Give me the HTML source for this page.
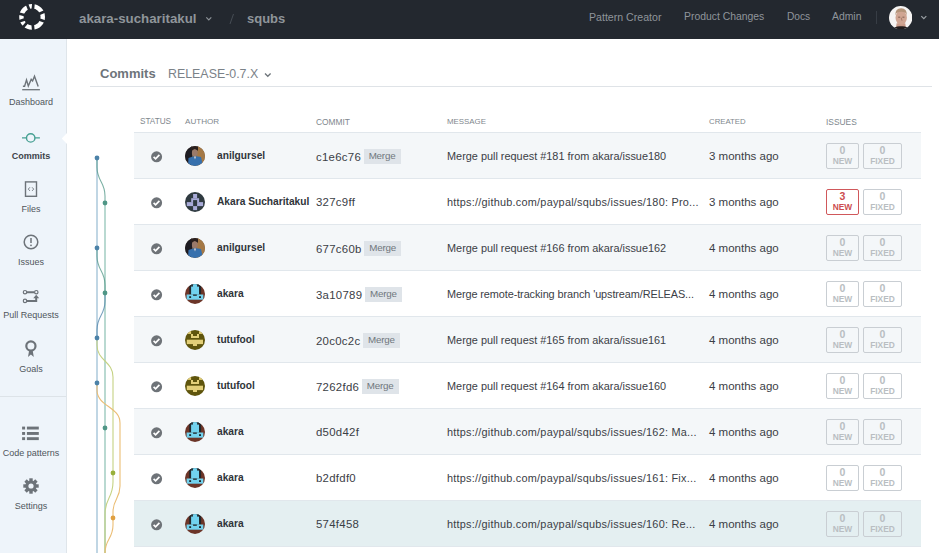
<!DOCTYPE html>
<html><head><meta charset="utf-8">
<style>
*{box-sizing:border-box;margin:0;padding:0}
html,body{width:939px;height:553px;overflow:hidden;background:#fff;font-family:"Liberation Sans",sans-serif}
.abs{position:absolute}
.t{position:absolute;white-space:nowrap;line-height:1}
#hdr{position:absolute;left:0;top:0;width:939px;height:39px;background:#23282f}
#side{position:absolute;left:0;top:39px;width:67px;height:514px;background:#eef4fa;border-right:1px solid #dfe5ea}
.nl{position:absolute;left:0;width:62px;text-align:center;font-size:9px;color:#50565c;white-space:nowrap;line-height:1}
.row{position:absolute;left:134px;width:787px;height:46px;border-bottom:1px solid #e1e7ec}
.odd{background:#f4f7f9}
.hl{background:#e4eff1}
.th{position:absolute;top:118px;font-size:8.5px;color:#80878d;white-space:nowrap;line-height:1}
.st{position:absolute;left:17px;top:18px}
.av{position:absolute;left:51px;top:13px;width:20px;height:20px}
.au{position:absolute;left:83px;top:18px;font-size:10.2px;font-weight:bold;color:#2f3439;white-space:nowrap;line-height:1}
.hs{position:absolute;left:182px;top:18px;font-size:11.4px;color:#3b4046;white-space:nowrap;line-height:1;letter-spacing:0.28px}
.mg{position:absolute;left:0;top:-2px;width:37px;height:15px;background:#dfe4e9;color:#70777d;font-size:9.8px;letter-spacing:-0.2px;line-height:14px;text-align:center}
.hw{position:relative;display:inline-block}
.ms{position:absolute;left:313px;top:18px;font-size:10.9px;color:#3b4046;white-space:nowrap;line-height:1}
.cr{position:absolute;left:575px;top:18px;font-size:11.5px;color:#3b4046;white-space:nowrap;line-height:1}
.bd{position:absolute;top:10px;height:26px;border:1px solid #c9ced3;border-radius:2px;color:#b9bec2;text-align:center;font-weight:bold;background:transparent}
.bd .n{position:absolute;left:0;right:0;top:1px;font-size:10.5px;line-height:1}
.bd .l{position:absolute;left:0;right:0;top:13px;font-size:8.4px;line-height:1}
.b1{left:692px;width:33px}
.b2{left:729px;width:39px}
.red{border-color:#d0585b;color:#cc4d50}
</style></head><body>

<div id="hdr">
<svg class="abs" style="left:0;top:0" width="60" height="39"><circle cx="32.1" cy="16.9" r="10.7" fill="none" stroke="#ffffff" stroke-width="4.4"/><path d="M32.71 10.93L33.62 1.98M29.85 11.34L26.48 2.99M37.62 14.56L45.91 11.04M37.74 18.95L46.20 22.03M32.62 22.88L33.41 31.84M28.16 21.43L22.26 28.22M26.43 18.85L17.92 21.78M26.28 15.45L17.55 13.27" stroke="#23282f" stroke-width="2.7"/></svg>
<div class="t" style="left:79px;top:12px;font-size:13.3px;font-weight:bold;color:#8f959a">akara-sucharitakul</div>
<svg class="abs" style="left:205px;top:16px" width="8" height="6"><path d="M1.3 1.3 L3.8 3.8 L6.3 1.3" fill="none" stroke="#8d9398" stroke-width="1.2"/></svg>
<svg class="abs" style="left:228px;top:9px" width="8" height="18"><path d="M5.5 5 L2 15" stroke="#4a5058" stroke-width="0.9"/></svg>
<div class="t" style="left:247px;top:12px;font-size:13px;font-weight:bold;color:#8f959a">squbs</div>
<div class="t" style="left:589px;top:11.5px;font-size:10.6px;color:#8f959b">Pattern Creator</div>
<div class="t" style="left:684px;top:11.5px;font-size:10.4px;color:#8f959b">Product Changes</div>
<div class="t" style="left:787px;top:11.5px;font-size:10.2px;color:#8f959b">Docs</div>
<div class="t" style="left:832px;top:11.5px;font-size:10.4px;color:#8f959b">Admin</div>
<div class="abs" style="left:876px;top:11px;width:1px;height:13px;background:#373d45"></div>
<svg class="abs" style="left:889px;top:5.5px" width="23.4" height="23.4" viewBox="0 0 23 23"><defs><clipPath id="uc"><circle cx="11.5" cy="11.5" r="11.5"/></clipPath><filter id="bl"><feGaussianBlur stdDeviation="0.5"/></filter></defs><g clip-path="url(#uc)"><rect width="23" height="23" fill="#f6f4f3"/><g filter="url(#bl)"><path d="M7 21 L7.5 17 L16 17 L16.5 21Z" fill="#c99a88"/><ellipse cx="12" cy="11.5" rx="5.6" ry="7" fill="#d0a592"/><path d="M6.2 9 Q6 2.5 12 2.3 Q18 2.5 17.6 9.5 L16.5 7 Q12 4.5 7.5 7Z" fill="#b49479"/><path d="M9 11 H11 M13.2 11 H15.2" stroke="#7a5a4c" stroke-width="0.9"/><path d="M12 11.5 L12.8 14.5" stroke="#9a6e60" stroke-width="0.8"/><path d="M2 23.5 Q6 19.5 12 20 Q18 19.5 21 23.5Z" fill="#221e1e"/></g></g></svg>
<svg class="abs" style="left:920px;top:15px" width="8" height="5"><path d="M1.3 1.2 L3.8 3.7 L6.3 1.2" fill="none" stroke="#9ba0a5" stroke-width="1.2"/></svg>
</div>
<div id="side"></div>
<svg class="abs" style="left:18px;top:70px" width="26" height="24"><path d="M4.9 16.2 L6.6 16.2 L8.5 9.9 L10.3 16 L13.2 9.4 L14.6 11 L16.5 6.3 L20.2 16.5" fill="none" stroke="#6d7379" stroke-width="1.4" stroke-linejoin="miter"/><path d="M4.2 19.7 H21.9" stroke="#6d7379" stroke-width="1.3"/></svg>
<div class="nl" style="top:98px">Dashboard</div>
<svg class="abs" style="left:18px;top:125px" width="26" height="26"><circle cx="12.7" cy="12.9" r="4.2" fill="none" stroke="#46a092" stroke-width="1.4"/><path d="M4 12.9 H8.5 M16.9 12.9 H21.9" stroke="#46a092" stroke-width="1.4"/></svg>
<div class="nl" style="top:152px;font-weight:bold;color:#3d4349">Commits</div>
<svg class="abs" style="left:61px;top:133px" width="7" height="11"><path d="M6 0 L0.8 5.5 L6 11Z" fill="#ffffff"/></svg>
<svg class="abs" style="left:23px;top:180px" width="16" height="18"><rect x="2.5" y="1.9" width="11" height="14.4" fill="none" stroke="#6d7379" stroke-width="1.4"/><path d="M6.9 7.3 L5.3 9.1 L6.9 10.9 M9.1 7.3 L10.7 9.1 L9.1 10.9" fill="none" stroke="#6d7379" stroke-width="0.9"/></svg>
<div class="nl" style="top:205px">Files</div>
<svg class="abs" style="left:22px;top:233px" width="18" height="18"><circle cx="9" cy="9" r="6.8" fill="none" stroke="#6d7379" stroke-width="1.5"/><path d="M9 5 V10" stroke="#6d7379" stroke-width="1.5"/><circle cx="9" cy="12.3" r="0.9" fill="#6d7379"/></svg>
<div class="nl" style="top:258px">Issues</div>
<svg class="abs" style="left:18px;top:284px" width="26" height="22"><g fill="none" stroke="#6d7379"><circle cx="7" cy="8.2" r="1.7" stroke-width="1.2"/><circle cx="18.3" cy="8.2" r="1.7" stroke-width="1.2"/><circle cx="7" cy="16.9" r="1.7" stroke-width="1.2"/><path d="M8.8 8.2 H16.5 M8.8 16.9 H18.2 V13.5" stroke-width="2"/></g><path d="M15.2 14.2 L18.2 10.8 L21.2 14.2Z" fill="#6d7379"/></svg>
<div class="nl" style="top:311px">Pull Requests</div>
<svg class="abs" style="left:18px;top:335px" width="26" height="26"><circle cx="12.9" cy="11" r="4.6" fill="none" stroke="#6d7379" stroke-width="2.2"/><path d="M11.2 15 L10 22 L12.9 19.6 L15.8 22 L14.6 15Z" fill="#6d7379"/></svg>
<div class="nl" style="top:365px">Goals</div>
<div class="abs" style="left:0;top:396px;width:66px;height:1px;background:#dde3e8"></div>
<svg class="abs" style="left:21px;top:425px" width="20" height="17"><g fill="#6d7379"><rect x="1.1" y="1.6" width="3" height="2.9"/><rect x="5.9" y="1.6" width="11.9" height="2.9"/><rect x="1.1" y="7" width="3" height="2.9"/><rect x="5.9" y="7" width="11.9" height="2.9"/><rect x="1.1" y="12.2" width="3" height="2.9"/><rect x="5.9" y="12.2" width="11.9" height="2.9"/></g></svg>
<div class="nl" style="top:449px">Code patterns</div>
<svg class="abs" style="left:21px;top:476px" width="20" height="20"><g transform="translate(10 10)" fill="#6d7379"><rect x="-1.7" y="-7.7" width="3.4" height="3.5" transform="rotate(0)"/><rect x="-1.7" y="-7.7" width="3.4" height="3.5" transform="rotate(45)"/><rect x="-1.7" y="-7.7" width="3.4" height="3.5" transform="rotate(90)"/><rect x="-1.7" y="-7.7" width="3.4" height="3.5" transform="rotate(135)"/><rect x="-1.7" y="-7.7" width="3.4" height="3.5" transform="rotate(180)"/><rect x="-1.7" y="-7.7" width="3.4" height="3.5" transform="rotate(225)"/><rect x="-1.7" y="-7.7" width="3.4" height="3.5" transform="rotate(270)"/><rect x="-1.7" y="-7.7" width="3.4" height="3.5" transform="rotate(315)"/><circle r="5.6"/></g><circle cx="10" cy="10" r="2.6" fill="#eef4fa"/></svg>
<div class="nl" style="top:502px">Settings</div>
<div class="t" style="left:100px;top:67px;font-size:13px;font-weight:bold;color:#6d747a">Commits</div>
<div class="t" style="left:168px;top:68px;font-size:12.4px;color:#7b8288">RELEASE-0.7.X</div>
<svg class="abs" style="left:264px;top:72px" width="8" height="6"><path d="M1 1.5 L3.8 4.3 L6.6 1.5" fill="none" stroke="#6d747a" stroke-width="1.3"/></svg>
<div class="abs" style="left:90px;top:86px;width:842px;height:1px;background:#dfe3e7"></div>
<div class="th" style="left:140px;font-size:8.2px">STATUS</div>
<div class="th" style="left:185px;font-size:8.1px">AUTHOR</div>
<div class="th" style="left:316px;font-size:8.4px">COMMIT</div>
<div class="th" style="left:447px;font-size:7.9px">MESSAGE</div>
<div class="th" style="left:709px;font-size:7.8px">CREATED</div>
<div class="th" style="left:826px;font-size:8.4px">ISSUES</div>
<div class="abs" style="left:134px;top:132px;width:787px;height:1px;background:#e1e7ec"></div>
<div class="row odd" style="top:133px">
<svg class="st" width="12" height="12"><circle cx="5.6" cy="5.8" r="5.5" fill="#6e7378"/><path d="M2.6 5.9 L4.6 7.9 L8.4 3.9" fill="none" stroke="#fff" stroke-width="1.7"/></svg>
<div class="av"><svg width="20" height="20" viewBox="0 0 20 20"><defs><clipPath id="c"><circle cx="10" cy="10" r="10"/></clipPath></defs><g clip-path="url(#c)"><rect width="20" height="20" fill="#6b5a48"/><rect x="12" y="0" width="8" height="20" fill="#a47845"/><rect x="0" y="0" width="7" height="20" fill="#1e1c22"/><rect x="6" y="0" width="7" height="4" fill="#2a2020"/><ellipse cx="9.8" cy="6.8" rx="2.9" ry="3.8" fill="#9a7a6a"/><path d="M6.6 5 Q9.8 1 13 5 L13 3 Q9.8 0 6.6 3Z" fill="#2a201c"/><path d="M3 20 L3.5 12 Q9.5 9 16 11 L18 20Z" fill="#3670ad"/><path d="M8.8 10.5 L10 13.5 L11.3 10.5Z" fill="#c8c8d0"/></g></svg></div>
<div class="au">anilgursel</div>
<div class="hs">c1e6c76<span class="hw" style="width:40px;height:10px;margin-left:2.5px"><span class="mg">Merge</span></span></div>
<div class="ms" style="letter-spacing:0px">Merge pull request #181 from akara/issue180</div>
<div class="cr">3 months ago</div>
<div class="bd b1"><div class="n">0</div><div class="l">NEW</div></div>
<div class="bd b2"><div class="n">0</div><div class="l">FIXED</div></div>
</div>
<div class="row" style="top:179px">
<svg class="st" width="12" height="12"><circle cx="5.6" cy="5.8" r="5.5" fill="#6e7378"/><path d="M2.6 5.9 L4.6 7.9 L8.4 3.9" fill="none" stroke="#fff" stroke-width="1.7"/></svg>
<div class="av"><svg width="20" height="20" viewBox="0 0 20 20"><defs><clipPath id="c"><circle cx="10" cy="10" r="10"/></clipPath></defs><g clip-path="url(#c)"><rect width="20" height="20" fill="#2f3a40"/><rect x="8.1" y="2" width="4" height="4.2" fill="#a9abd8"/><rect x="6.2" y="6.2" width="7.9" height="1.9" fill="#a9abd8"/><rect x="6.2" y="8" width="1.9" height="2.1" fill="#a9abd8"/><rect x="12.1" y="8" width="2" height="2.1" fill="#a9abd8"/><rect x="1.8" y="10.1" width="6.3" height="4" fill="#a9abd8"/><rect x="12.1" y="10.1" width="6" height="4" fill="#a9abd8"/><rect x="8.1" y="14.1" width="4" height="4" fill="#a9abd8"/></g></svg></div>
<div class="au">Akara Sucharitakul</div>
<div class="hs">327c9ff</div>
<div class="ms" style="letter-spacing:0.23px">https://github.com/paypal/squbs/issues/180: Pro...</div>
<div class="cr">3 months ago</div>
<div class="bd b1 red"><div class="n">3</div><div class="l">NEW</div></div>
<div class="bd b2"><div class="n">0</div><div class="l">FIXED</div></div>
</div>
<div class="row odd" style="top:225px">
<svg class="st" width="12" height="12"><circle cx="5.6" cy="5.8" r="5.5" fill="#6e7378"/><path d="M2.6 5.9 L4.6 7.9 L8.4 3.9" fill="none" stroke="#fff" stroke-width="1.7"/></svg>
<div class="av"><svg width="20" height="20" viewBox="0 0 20 20"><defs><clipPath id="c"><circle cx="10" cy="10" r="10"/></clipPath></defs><g clip-path="url(#c)"><rect width="20" height="20" fill="#6b5a48"/><rect x="12" y="0" width="8" height="20" fill="#a47845"/><rect x="0" y="0" width="7" height="20" fill="#1e1c22"/><rect x="6" y="0" width="7" height="4" fill="#2a2020"/><ellipse cx="9.8" cy="6.8" rx="2.9" ry="3.8" fill="#9a7a6a"/><path d="M6.6 5 Q9.8 1 13 5 L13 3 Q9.8 0 6.6 3Z" fill="#2a201c"/><path d="M3 20 L3.5 12 Q9.5 9 16 11 L18 20Z" fill="#3670ad"/><path d="M8.8 10.5 L10 13.5 L11.3 10.5Z" fill="#c8c8d0"/></g></svg></div>
<div class="au">anilgursel</div>
<div class="hs">677c60b<span class="hw" style="width:40px;height:10px;margin-left:2.5px"><span class="mg">Merge</span></span></div>
<div class="ms" style="letter-spacing:0px">Merge pull request #166 from akara/issue162</div>
<div class="cr">4 months ago</div>
<div class="bd b1"><div class="n">0</div><div class="l">NEW</div></div>
<div class="bd b2"><div class="n">0</div><div class="l">FIXED</div></div>
</div>
<div class="row" style="top:271px">
<svg class="st" width="12" height="12"><circle cx="5.6" cy="5.8" r="5.5" fill="#6e7378"/><path d="M2.6 5.9 L4.6 7.9 L8.4 3.9" fill="none" stroke="#fff" stroke-width="1.7"/></svg>
<div class="av"><svg width="20" height="20" viewBox="0 0 20 20"><defs><clipPath id="c"><circle cx="10" cy="10" r="10"/></clipPath></defs><g clip-path="url(#c)"><rect width="20" height="20" fill="#6c3528"/><rect x="4.2" y="0" width="11.9" height="10.6" fill="#22262a"/><rect x="6.1" y="0" width="7.9" height="10.6" fill="#72d2ee"/><rect x="6.1" y="0" width="1.8" height="2.6" fill="#22262a"/><rect x="12.1" y="0" width="1.9" height="2.6" fill="#22262a"/><rect x="1.6" y="10.5" width="16.7" height="5.2" fill="#72d2ee"/><rect x="4.2" y="12.2" width="1.9" height="1.8" fill="#1e2a30"/><rect x="14" y="12.2" width="2" height="1.8" fill="#1e2a30"/><rect x="8.1" y="10.5" width="3.7" height="1.3" fill="#1e2a30"/></g></svg></div>
<div class="au">akara</div>
<div class="hs">3a10789<span class="hw" style="width:40px;height:10px;margin-left:2.5px"><span class="mg">Merge</span></span></div>
<div class="ms" style="letter-spacing:-0.095px">Merge remote-tracking branch 'upstream/RELEAS...</div>
<div class="cr">4 months ago</div>
<div class="bd b1"><div class="n">0</div><div class="l">NEW</div></div>
<div class="bd b2"><div class="n">0</div><div class="l">FIXED</div></div>
</div>
<div class="row odd" style="top:317px">
<svg class="st" width="12" height="12"><circle cx="5.6" cy="5.8" r="5.5" fill="#6e7378"/><path d="M2.6 5.9 L4.6 7.9 L8.4 3.9" fill="none" stroke="#fff" stroke-width="1.7"/></svg>
<div class="av"><svg width="20" height="20" viewBox="0 0 20 20"><defs><clipPath id="c"><circle cx="10" cy="10" r="10"/></clipPath></defs><g clip-path="url(#c)"><rect width="20" height="20" fill="#5f550d"/><rect x="0" y="0" width="6.1" height="3.9" fill="#e3cf78"/><rect x="14" y="0" width="6" height="3.9" fill="#e3cf78"/><rect x="6" y="4" width="8" height="4" fill="#e3cf78"/><rect x="8" y="4" width="4" height="2" fill="#5f550d"/><rect x="1.8" y="9.7" width="16.2" height="4.4" fill="#e3cf78"/><rect x="8" y="14" width="4" height="2" fill="#e3cf78"/></g></svg></div>
<div class="au">tutufool</div>
<div class="hs">20c0c2c<span class="hw" style="width:40px;height:10px;margin-left:2.5px"><span class="mg">Merge</span></span></div>
<div class="ms" style="letter-spacing:0px">Merge pull request #165 from akara/issue161</div>
<div class="cr">4 months ago</div>
<div class="bd b1"><div class="n">0</div><div class="l">NEW</div></div>
<div class="bd b2"><div class="n">0</div><div class="l">FIXED</div></div>
</div>
<div class="row" style="top:363px">
<svg class="st" width="12" height="12"><circle cx="5.6" cy="5.8" r="5.5" fill="#6e7378"/><path d="M2.6 5.9 L4.6 7.9 L8.4 3.9" fill="none" stroke="#fff" stroke-width="1.7"/></svg>
<div class="av"><svg width="20" height="20" viewBox="0 0 20 20"><defs><clipPath id="c"><circle cx="10" cy="10" r="10"/></clipPath></defs><g clip-path="url(#c)"><rect width="20" height="20" fill="#5f550d"/><rect x="0" y="0" width="6.1" height="3.9" fill="#e3cf78"/><rect x="14" y="0" width="6" height="3.9" fill="#e3cf78"/><rect x="6" y="4" width="8" height="4" fill="#e3cf78"/><rect x="8" y="4" width="4" height="2" fill="#5f550d"/><rect x="1.8" y="9.7" width="16.2" height="4.4" fill="#e3cf78"/><rect x="8" y="14" width="4" height="2" fill="#e3cf78"/></g></svg></div>
<div class="au">tutufool</div>
<div class="hs">7262fd6<span class="hw" style="width:40px;height:10px;margin-left:2.5px"><span class="mg">Merge</span></span></div>
<div class="ms" style="letter-spacing:0px">Merge pull request #164 from akara/issue160</div>
<div class="cr">4 months ago</div>
<div class="bd b1"><div class="n">0</div><div class="l">NEW</div></div>
<div class="bd b2"><div class="n">0</div><div class="l">FIXED</div></div>
</div>
<div class="row odd" style="top:409px">
<svg class="st" width="12" height="12"><circle cx="5.6" cy="5.8" r="5.5" fill="#6e7378"/><path d="M2.6 5.9 L4.6 7.9 L8.4 3.9" fill="none" stroke="#fff" stroke-width="1.7"/></svg>
<div class="av"><svg width="20" height="20" viewBox="0 0 20 20"><defs><clipPath id="c"><circle cx="10" cy="10" r="10"/></clipPath></defs><g clip-path="url(#c)"><rect width="20" height="20" fill="#6c3528"/><rect x="4.2" y="0" width="11.9" height="10.6" fill="#22262a"/><rect x="6.1" y="0" width="7.9" height="10.6" fill="#72d2ee"/><rect x="6.1" y="0" width="1.8" height="2.6" fill="#22262a"/><rect x="12.1" y="0" width="1.9" height="2.6" fill="#22262a"/><rect x="1.6" y="10.5" width="16.7" height="5.2" fill="#72d2ee"/><rect x="4.2" y="12.2" width="1.9" height="1.8" fill="#1e2a30"/><rect x="14" y="12.2" width="2" height="1.8" fill="#1e2a30"/><rect x="8.1" y="10.5" width="3.7" height="1.3" fill="#1e2a30"/></g></svg></div>
<div class="au">akara</div>
<div class="hs">d50d42f</div>
<div class="ms" style="letter-spacing:0.23px">https://github.com/paypal/squbs/issues/162: Ma...</div>
<div class="cr">4 months ago</div>
<div class="bd b1"><div class="n">0</div><div class="l">NEW</div></div>
<div class="bd b2"><div class="n">0</div><div class="l">FIXED</div></div>
</div>
<div class="row" style="top:455px">
<svg class="st" width="12" height="12"><circle cx="5.6" cy="5.8" r="5.5" fill="#6e7378"/><path d="M2.6 5.9 L4.6 7.9 L8.4 3.9" fill="none" stroke="#fff" stroke-width="1.7"/></svg>
<div class="av"><svg width="20" height="20" viewBox="0 0 20 20"><defs><clipPath id="c"><circle cx="10" cy="10" r="10"/></clipPath></defs><g clip-path="url(#c)"><rect width="20" height="20" fill="#6c3528"/><rect x="4.2" y="0" width="11.9" height="10.6" fill="#22262a"/><rect x="6.1" y="0" width="7.9" height="10.6" fill="#72d2ee"/><rect x="6.1" y="0" width="1.8" height="2.6" fill="#22262a"/><rect x="12.1" y="0" width="1.9" height="2.6" fill="#22262a"/><rect x="1.6" y="10.5" width="16.7" height="5.2" fill="#72d2ee"/><rect x="4.2" y="12.2" width="1.9" height="1.8" fill="#1e2a30"/><rect x="14" y="12.2" width="2" height="1.8" fill="#1e2a30"/><rect x="8.1" y="10.5" width="3.7" height="1.3" fill="#1e2a30"/></g></svg></div>
<div class="au">akara</div>
<div class="hs">b2dfdf0</div>
<div class="ms" style="letter-spacing:0.23px">https://github.com/paypal/squbs/issues/161: Fix...</div>
<div class="cr">4 months ago</div>
<div class="bd b1"><div class="n">0</div><div class="l">NEW</div></div>
<div class="bd b2"><div class="n">0</div><div class="l">FIXED</div></div>
</div>
<div class="row hl" style="top:501px">
<svg class="st" width="12" height="12"><circle cx="5.6" cy="5.8" r="5.5" fill="#6e7378"/><path d="M2.6 5.9 L4.6 7.9 L8.4 3.9" fill="none" stroke="#fff" stroke-width="1.7"/></svg>
<div class="av"><svg width="20" height="20" viewBox="0 0 20 20"><defs><clipPath id="c"><circle cx="10" cy="10" r="10"/></clipPath></defs><g clip-path="url(#c)"><rect width="20" height="20" fill="#6c3528"/><rect x="4.2" y="0" width="11.9" height="10.6" fill="#22262a"/><rect x="6.1" y="0" width="7.9" height="10.6" fill="#72d2ee"/><rect x="6.1" y="0" width="1.8" height="2.6" fill="#22262a"/><rect x="12.1" y="0" width="1.9" height="2.6" fill="#22262a"/><rect x="1.6" y="10.5" width="16.7" height="5.2" fill="#72d2ee"/><rect x="4.2" y="12.2" width="1.9" height="1.8" fill="#1e2a30"/><rect x="14" y="12.2" width="2" height="1.8" fill="#1e2a30"/><rect x="8.1" y="10.5" width="3.7" height="1.3" fill="#1e2a30"/></g></svg></div>
<div class="au">akara</div>
<div class="hs">574f458</div>
<div class="ms" style="letter-spacing:0.23px">https://github.com/paypal/squbs/issues/160: Re...</div>
<div class="cr">4 months ago</div>
<div class="bd b1"><div class="n">0</div><div class="l">NEW</div></div>
<div class="bd b2"><div class="n">0</div><div class="l">FIXED</div></div>
</div>
<svg class="abs" style="left:80px;top:133px" width="54" height="420" viewBox="80 133 54 420">
<path d="M97 158 V553" stroke="#9bbdd4" stroke-width="1.25" fill="none"/>
<path d="M105 203 V553" stroke="#8fc2b5" stroke-width="1.25" fill="none"/>
<path d="M97 158 V167 C97 181.5 105 181.5 105 196 V203" stroke="#4f9686" stroke-opacity="0.75" stroke-width="1.1" fill="none"/>
<path d="M97 248 V256 C97 270.5 105 270.5 105 285 V293" stroke="#4f9686" stroke-opacity="0.75" stroke-width="1.1" fill="none"/>
<path d="M105 293 V301 C105 315.5 97 315.5 97 330 V338" stroke="#4c82a8" stroke-opacity="0.75" stroke-width="1.1" fill="none"/>
<path d="M97 338 V345 C97 361.0 113 361.0 113 377 V473 V482 C113 498.0 105 498.0 105 514 V553" stroke="#c5d283" stroke-width="1.1" fill="none"/>
<path d="M97 383 V390 C97 406.5 120 406.5 120 423 V486 C120 499.0 113 499.0 113 512 V518 V525 C113 539.0 105 539.0 105 553" stroke="#ebbd74" stroke-width="1.1" fill="none"/>
<circle cx="97" cy="158" r="2.4" fill="#4c82a8"/>
<circle cx="105" cy="203" r="2.4" fill="#4f9686"/>
<circle cx="97" cy="248" r="2.4" fill="#4c82a8"/>
<circle cx="105" cy="293" r="2.4" fill="#4f9686"/>
<circle cx="97" cy="338" r="2.4" fill="#4c82a8"/>
<circle cx="97" cy="383" r="2.4" fill="#4c82a8"/>
<circle cx="105" cy="428" r="2.4" fill="#4f9686"/>
<circle cx="113" cy="473" r="2.4" fill="#98b03a"/>
<circle cx="113" cy="518" r="2.4" fill="#e0a040"/>
</svg>
</body></html>
